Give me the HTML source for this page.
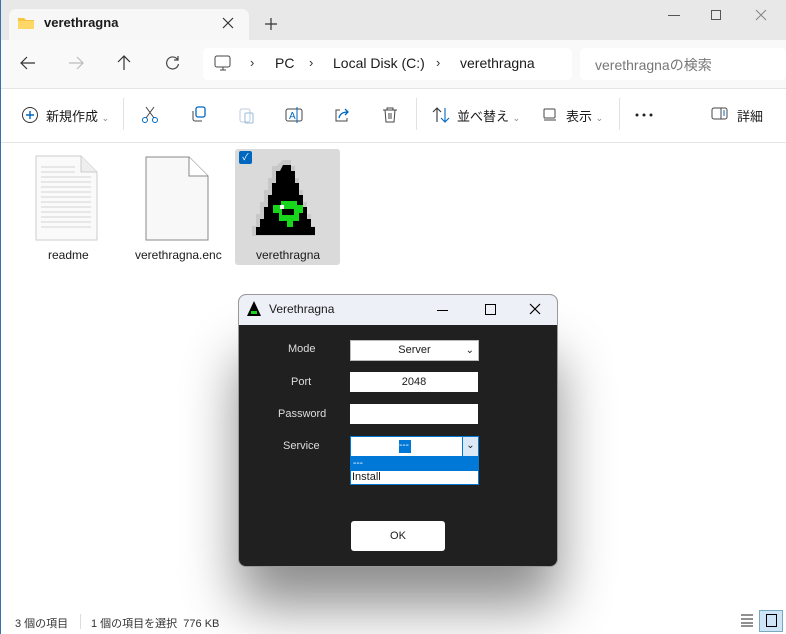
<!DOCTYPE html>
<html><head><meta charset="utf-8"><style>
*{margin:0;padding:0;box-sizing:border-box}
body{width:786px;height:634px;overflow:hidden;background:#fff;font-family:"Segoe UI","Liberation Sans","Noto Sans CJK JP",sans-serif;font-size:13px;color:#1a1a1a;position:relative}
.a{position:absolute}
.t{white-space:nowrap}
</style></head><body>
<div class="a" style="left:0;top:0;width:786px;height:40px;background:#e8e8e8"></div>
<div class="a" style="left:9px;top:9px;width:240px;height:31px;background:#f7f7f7;border-radius:7px 7px 0 0"></div>
<svg class="a" style="left:17px;top:16px" width="18" height="14"><path d="M1 2h6l2 2h8v9H1z" fill="#f4c542"/><path d="M1 5h16v8H1z" fill="#ffd766"/></svg>
<div class="a t" style="left:44px;top:15px;font-size:13px;font-weight:600">verethragna</div>
<svg class="a" style="left:222px;top:17px" width="12" height="12"><path d="M1 1l10 10M11 1L1 11" stroke="#333" stroke-width="1.2"/></svg>
<svg class="a" style="left:265px;top:18px" width="12" height="12"><path d="M6 0v12M0 6h12" stroke="#333" stroke-width="1.2"/></svg>
<div class="a" style="left:668px;top:15px;width:12px;height:1px;background:#555"></div>
<div class="a" style="left:711px;top:10px;width:10px;height:10px;border:1px solid #555"></div>
<svg class="a" style="left:755px;top:9px" width="12" height="12"><path d="M1 1l10 10M11 1L1 11" stroke="#888" stroke-width="1.1"/></svg>
<div class="a" style="left:0;top:40px;width:786px;height:48px;background:#f9f9f9"></div>
<svg class="a" style="left:20px;top:56px" width="16" height="14"><path d="M15 7H1M7 1L1 7l6 6" fill="none" stroke="#333" stroke-width="1.2"/></svg>
<svg class="a" style="left:68px;top:56px" width="16" height="14"><path d="M1 7h14M9 1l6 6-6 6" fill="none" stroke="#bbb" stroke-width="1.2"/></svg>
<svg class="a" style="left:117px;top:55px" width="14" height="16"><path d="M7 15V1M1 7l6-6 6 6" fill="none" stroke="#333" stroke-width="1.2"/></svg>
<svg class="a" style="left:165px;top:55px" width="15" height="15"><path d="M12.5 4.5A6 6 0 1 0 13.5 9" fill="none" stroke="#444" stroke-width="1.2"/><path d="M13 1v4H9" fill="none" stroke="#444" stroke-width="1.2"/></svg>
<div class="a" style="left:203px;top:48px;width:369px;height:32px;background:#fff;border-radius:5px"></div>
<div class="a" style="left:580px;top:48px;width:206px;height:32px;background:#fff;border-radius:5px"></div>
<svg class="a" style="left:214px;top:55px" width="18" height="17"><rect x="1" y="1" width="15" height="11" rx="2" fill="none" stroke="#444"/><path d="M6 15h6M9 12v3" stroke="#444"/></svg>
<div class="a t" style="left:250px;top:55px;color:#333">›</div>
<div class="a t" style="left:275px;top:55px;font-size:14px">PC</div>
<div class="a t" style="left:309px;top:55px;color:#333">›</div>
<div class="a t" style="left:333px;top:55px;font-size:14px">Local Disk (C:)</div>
<div class="a t" style="left:436px;top:55px;color:#333">›</div>
<div class="a t" style="left:460px;top:55px;font-size:14px">verethragna</div>
<div class="a t" style="left:595px;top:55px;font-size:14px;color:#777">verethragnaの検索</div>
<div class="a" style="left:0;top:88px;width:786px;height:1px;background:#e5e5e5"></div>
<svg class="a" style="left:21px;top:106px" width="18" height="18"><circle cx="9" cy="9" r="7.5" fill="none" stroke="#333"/><path d="M9 5v8M5 9h8" stroke="#0067c0" stroke-width="1.4"/></svg>
<div class="a t" style="left:46px;top:106px;font-size:13px">新規作成 <span style="font-size:9px;color:#888">⌄</span></div>
<div class="a" style="left:123px;top:98px;width:1px;height:32px;background:#e2e2e2"></div>
<svg class="a" style="left:141px;top:106px" width="18" height="18"><path d="M5 1l8 11M13 1L5 12" stroke="#444" fill="none"/><circle cx="4" cy="14" r="2.5" fill="none" stroke="#0067c0"/><circle cx="14" cy="14" r="2.5" fill="none" stroke="#0067c0"/></svg>
<svg class="a" style="left:190px;top:106px" width="18" height="18"><rect x="6" y="1" width="9" height="10" rx="2" fill="none" stroke="#0067c0" stroke-width="1.3"/><path d="M3 5v8a2 2 0 0 0 2 2h7" fill="none" stroke="#444"/></svg>
<svg class="a" style="left:238px;top:106px" width="18" height="18"><rect x="2" y="3" width="10" height="13" rx="2" fill="none" stroke="#bcd"/><rect x="7" y="7" width="8" height="10" rx="1" fill="none" stroke="#9bd"/></svg>
<svg class="a" style="left:285px;top:106px" width="18" height="18"><rect x="1" y="3" width="16" height="12" rx="2" fill="none" stroke="#444"/><text x="4" y="13" font-size="10" fill="#0067c0" font-family="Liberation Sans">A</text><path d="M12 1v16" stroke="#0067c0"/></svg>
<svg class="a" style="left:333px;top:106px" width="18" height="18"><path d="M7 4H3v11h11v-3" fill="none" stroke="#444"/><path d="M6 12c1-5 5-6 9-6M12 3l3 3-3 3" fill="none" stroke="#0067c0" stroke-width="1.3"/></svg>
<svg class="a" style="left:381px;top:106px" width="18" height="18"><path d="M2 4h14M6 4V2h6v2M4 4l1 12h8l1-12M8 7v6M10 7v6" fill="none" stroke="#444"/></svg>
<div class="a" style="left:416px;top:98px;width:1px;height:32px;background:#e2e2e2"></div>
<svg class="a" style="left:432px;top:107px" width="18" height="16"><path d="M5 15V1M1 5l4-4 4 4" fill="none" stroke="#333" stroke-width="1.1"/><path d="M13 1v14M9 11l4 4 4-4" fill="none" stroke="#0067c0" stroke-width="1.1"/></svg>
<div class="a t" style="left:457px;top:106px">並べ替え <span style="font-size:9px;color:#888">⌄</span></div>
<svg class="a" style="left:543px;top:108px" width="14" height="13"><rect x="1" y="1" width="11" height="9" rx="1" fill="none" stroke="#444"/><path d="M1 12h12" stroke="#444"/></svg>
<div class="a t" style="left:566px;top:106px">表示 <span style="font-size:9px;color:#888">⌄</span></div>
<div class="a" style="left:619px;top:98px;width:1px;height:32px;background:#e2e2e2"></div>
<svg class="a" style="left:635px;top:113px" width="18" height="4"><circle cx="2" cy="2" r="1.5" fill="#222"/><circle cx="9" cy="2" r="1.5" fill="#222"/><circle cx="16" cy="2" r="1.5" fill="#222"/></svg>
<svg class="a" style="left:711px;top:107px" width="18" height="14"><rect x="1" y="1" width="15" height="11" rx="2" fill="none" stroke="#444"/><path d="M10 1v11" stroke="#444"/><path d="M12 4h2M12 6h2M12 8h2" stroke="#0067c0"/></svg>
<div class="a t" style="left:737px;top:106px">詳細</div>
<div class="a" style="left:0;top:142px;width:786px;height:1px;background:#e5e5e5"></div>
<svg class="a" style="left:35px;top:155px" width="64" height="86"><path d="M1 1h45l16 16v68H1z" fill="#fafafa" stroke="#ccc"/><path d="M46 1v16h16" fill="#eee" stroke="#ccc"/><g stroke="#d4d4d4"><path d="M6 12h34M6 17h34M6 22h50M6 27h50M6 32h50M6 37h50M6 42h50M6 47h50M6 52h50M6 57h50M6 62h50M6 67h50M6 72h50"/></g></svg>
<div class="a t" style="left:48px;top:248px;font-size:12px">readme</div>
<svg class="a" style="left:145px;top:156px" width="65" height="86"><path d="M1 1h43l19 19v64H1z" fill="#f8f8f8" stroke="#888"/><path d="M44 1v19h19" fill="#fff" stroke="#888"/></svg>
<div class="a t" style="left:135px;top:248px;font-size:12px">verethragna.enc</div>
<div class="a" style="left:235px;top:149px;width:105px;height:116px;background:#dadada;border-radius:3px"></div>
<div class="a" style="left:239px;top:151px;width:13px;height:13px;background:#0067c0;border-radius:2px;color:#fff;font-size:9px;line-height:13px;text-align:center">✓</div>
<svg class="a" style="left:252px;top:160px" width="72" height="76" shape-rendering="crispEdges">
<path d="M31 0h8v6h4v12h4v12h4v12h4v12h4v12h4v10H0V66h4V54h4V42h4V30h4V18h4V6h4z" fill="#c8c8c8"/>
<path d="M31 5h8v6h4v12h4v12h4v12h4v12h4v8h4v8H4v-8h4v-8h4V47h4V35h4V23h4V11h4z" fill="#000"/>
<path d="M21 45h8v-4h16v4h6v8h-4v8h-6v6h-6v-6h-8v-8h-6z" fill="#17d61b"/>
<path d="M30 49h12v6H30z" fill="#000"/><path d="M28 45h4v4h-4z" fill="#fff"/>
</svg>
<div class="a t" style="left:256px;top:248px;font-size:12px">verethragna</div>
<div class="a" style="left:250px;top:340px;width:296px;height:226px;box-shadow:0 28px 55px 12px rgba(0,0,0,.45);border-radius:8px"></div>
<div class="a" style="left:238px;top:294px;width:320px;height:273px;background:#202020;border-radius:8px;overflow:hidden;border:1px solid #999">
<div class="a" style="left:0;top:0;width:320px;height:30px;background:#eef0f8"></div>
<svg class="a" style="left:8px;top:6px" width="14" height="16"><path d="M7 0L14 15H0z" fill="#000"/><path d="M4 10h6v3H4z" fill="#17d61b"/></svg>
<div class="a t" style="left:30px;top:7px;font-size:12px">Verethragna</div>
<div class="a" style="left:198px;top:15px;width:11px;height:1px;background:#000"></div>
<div class="a" style="left:246px;top:9px;width:11px;height:11px;border:1.3px solid #000"></div>
<svg class="a" style="left:290px;top:8px" width="12" height="12"><path d="M1 1l10 10M11 1L1 11" stroke="#000" stroke-width="1.2"/></svg>
</div>
<div class="a t" style="left:288px;top:343px;font-size:11px;color:#ddd">Mode</div>
<div class="a t" style="left:291px;top:376px;font-size:11px;color:#ddd">Port</div>
<div class="a t" style="left:278px;top:408px;font-size:11px;color:#ddd">Password</div>
<div class="a t" style="left:283px;top:440px;font-size:11px;color:#ddd">Service</div>
<div class="a" style="left:350px;top:340px;width:129px;height:21px;background:#fff;border:1px solid #bbb;font-size:11px;text-align:center;line-height:19px">Server<span class="a" style="right:4px;top:0;font-size:10px">⌄</span></div>
<div class="a" style="left:350px;top:372px;width:128px;height:20px;background:#fff;font-size:11px;text-align:center;line-height:20px">2048</div>
<div class="a" style="left:350px;top:404px;width:128px;height:20px;background:#fff"></div>
<div class="a" style="left:350px;top:436px;width:129px;height:21px;background:#fff;border:1px solid #0078d7"></div>
<div class="a" style="left:462px;top:437px;width:16px;height:19px;background:#dbe8f5;border-left:1px solid #0078d7;font-size:10px;text-align:center;line-height:17px">⌄</div>
<div class="a" style="left:399px;top:440px;width:12px;height:13px;background:#0078d7;color:#fff;font-size:10px;line-height:12px">---</div>
<div class="a" style="left:350px;top:457px;width:129px;height:28px;background:#fff;border:1px solid #0078d7"></div>
<div class="a" style="left:351px;top:458px;width:127px;height:13px;background:#0078d7;color:#fff;font-size:10px;line-height:11px;padding-left:2px">---</div>
<div class="a t" style="left:352px;top:471px;font-size:11px">Install</div>
<div class="a" style="left:351px;top:521px;width:94px;height:30px;background:#fff;border-radius:3px;font-size:11px;text-align:center;line-height:30px">OK</div>
<div class="a t" style="left:15px;top:615px;font-size:11px;color:#333">3 個の項目</div>
<div class="a" style="left:80px;top:614px;width:1px;height:15px;background:#ddd"></div>
<div class="a t" style="left:91px;top:615px;font-size:11px;color:#333">1 個の項目を選択&nbsp; 776 KB</div>
<svg class="a" style="left:741px;top:614px" width="12" height="13"><path d="M0 1h12M0 5h12M0 9h12M0 12h12" stroke="#222"/></svg>
<div class="a" style="left:759px;top:610px;width:24px;height:22px;background:#cfe4f7;border:1px solid #7ab"></div>
<div class="a" style="left:766px;top:614px;width:11px;height:13px;border:1.3px solid #000"></div>
<div class="a" style="left:0;top:0;width:1px;height:634px;background:#3a6fb0"></div>
</body></html>
